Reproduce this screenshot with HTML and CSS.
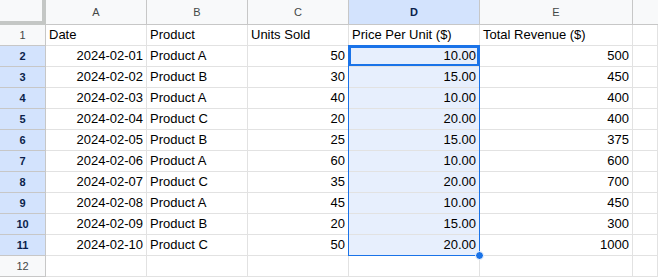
FILE: index.html
```html
<!DOCTYPE html>
<html lang="en">
<head>
    <meta charset="UTF-8">
    <meta name="viewport" content="width=device-width, initial-scale=1.0">
    <title>Sales Sheet</title>
    <link rel="stylesheet" href="styles.css">
</head>
<body>
    <main class="sheet">
        <div class="grid">
            <div class="corner"></div>
            <div class="col-head">A</div>
            <div class="col-head">B</div>
            <div class="col-head">C</div>
            <div class="col-head active">D</div>
            <div class="col-head">E</div>
            <div class="col-head last"></div>

            <div class="row-head">1</div>
            <div class="cell">Date</div>
            <div class="cell">Product</div>
            <div class="cell">Units Sold</div>
            <div class="cell">Price Per Unit ($)</div>
            <div class="cell">Total Revenue ($)</div>
            <div class="cell"></div>

            <div class="row-head active">2</div>
            <div class="cell num">2024-02-01</div>
            <div class="cell">Product A</div>
            <div class="cell num">50</div>
            <div class="cell num sel current">10.00</div>
            <div class="cell num">500</div>
            <div class="cell"></div>

            <div class="row-head active">3</div>
            <div class="cell num">2024-02-02</div>
            <div class="cell">Product B</div>
            <div class="cell num">30</div>
            <div class="cell num sel">15.00</div>
            <div class="cell num">450</div>
            <div class="cell"></div>

            <div class="row-head active">4</div>
            <div class="cell num">2024-02-03</div>
            <div class="cell">Product A</div>
            <div class="cell num">40</div>
            <div class="cell num sel">10.00</div>
            <div class="cell num">400</div>
            <div class="cell"></div>

            <div class="row-head active">5</div>
            <div class="cell num">2024-02-04</div>
            <div class="cell">Product C</div>
            <div class="cell num">20</div>
            <div class="cell num sel">20.00</div>
            <div class="cell num">400</div>
            <div class="cell"></div>

            <div class="row-head active">6</div>
            <div class="cell num">2024-02-05</div>
            <div class="cell">Product B</div>
            <div class="cell num">25</div>
            <div class="cell num sel">15.00</div>
            <div class="cell num">375</div>
            <div class="cell"></div>

            <div class="row-head active">7</div>
            <div class="cell num">2024-02-06</div>
            <div class="cell">Product A</div>
            <div class="cell num">60</div>
            <div class="cell num sel">10.00</div>
            <div class="cell num">600</div>
            <div class="cell"></div>

            <div class="row-head active">8</div>
            <div class="cell num">2024-02-07</div>
            <div class="cell">Product C</div>
            <div class="cell num">35</div>
            <div class="cell num sel">20.00</div>
            <div class="cell num">700</div>
            <div class="cell"></div>

            <div class="row-head active">9</div>
            <div class="cell num">2024-02-08</div>
            <div class="cell">Product A</div>
            <div class="cell num">45</div>
            <div class="cell num sel">10.00</div>
            <div class="cell num">450</div>
            <div class="cell"></div>

            <div class="row-head active">10</div>
            <div class="cell num">2024-02-09</div>
            <div class="cell">Product B</div>
            <div class="cell num">20</div>
            <div class="cell num sel">15.00</div>
            <div class="cell num">300</div>
            <div class="cell"></div>

            <div class="row-head active">11</div>
            <div class="cell num">2024-02-10</div>
            <div class="cell">Product C</div>
            <div class="cell num">50</div>
            <div class="cell num sel">20.00</div>
            <div class="cell num">1000</div>
            <div class="cell"></div>

            <div class="row-head">12</div>
            <div class="cell"></div>
            <div class="cell"></div>
            <div class="cell"></div>
            <div class="cell"></div>
            <div class="cell"></div>
            <div class="cell"></div>

            <div class="selection"><span class="handle"></span></div>
        </div>
    </main>
</body>
</html>
```

FILE: styles.css
```css
* {
    margin: 0;
    box-sizing: border-box;
}
html, body {
    width: 100%;
    height: 100%;
    background-color: white;
    overflow: hidden;
}
body {
    font-family: "Liberation Sans", Arial, sans-serif;
    font-size: 13px;
    color: black;
}
.grid {
    position: relative;
    display: grid;
    grid-template-columns: 46px 101px 101px 101px 131px 153px 1fr;
    grid-template-rows: 25px repeat(12, 21px);
}
.cell {
    border-right: 1px solid #e2e2e2;
    border-bottom: 1px solid #e2e2e2;
    padding: 0 3px;
    line-height: 20px;
    white-space: nowrap;
    overflow: hidden;
}
.num {
    text-align: right;
}
.sel {
    background-color: #e7effd;
}
.corner {
    background-color: #f8f9fa;
    border-right: 4px solid #c4c7c5;
    border-bottom: 4px solid #c4c7c5;
}
.col-head {
    background-color: #f8f9fa;
    border-right: 1px solid #c7c7c7;
    border-bottom: 1px solid #c7c7c7;
    color: #444746;
    font-size: 11px;
    line-height: 24px;
    text-align: center;
}
.col-head.last {
    border-right: none;
}
.row-head {
    background-color: #f8f9fa;
    border-right: 1px solid #c7c7c7;
    border-bottom: 1px solid #c7c7c7;
    color: #444746;
    font-size: 11px;
    line-height: 20px;
    text-align: center;
}
.col-head.active, .row-head.active {
    background-color: #d3e3fd;
    color: #0b1f4a;
    font-weight: bold;
}
.current {
    box-shadow: inset 0 0 0 2px #1a73e8;
}

/* range outline drawn over the grid */
.selection {
    position: absolute;
    left: 348px;
    top: 45px;
    width: 132px;
    height: 211px;
    border: 1px solid #1a73e8;
    pointer-events: none;
}
.handle {
    position: absolute;
    right: -5px;
    bottom: -5px;
    width: 9px;
    height: 9px;
    border-radius: 50%;
    background-color: #1a73e8;
    border: 1px solid white;
}
```
